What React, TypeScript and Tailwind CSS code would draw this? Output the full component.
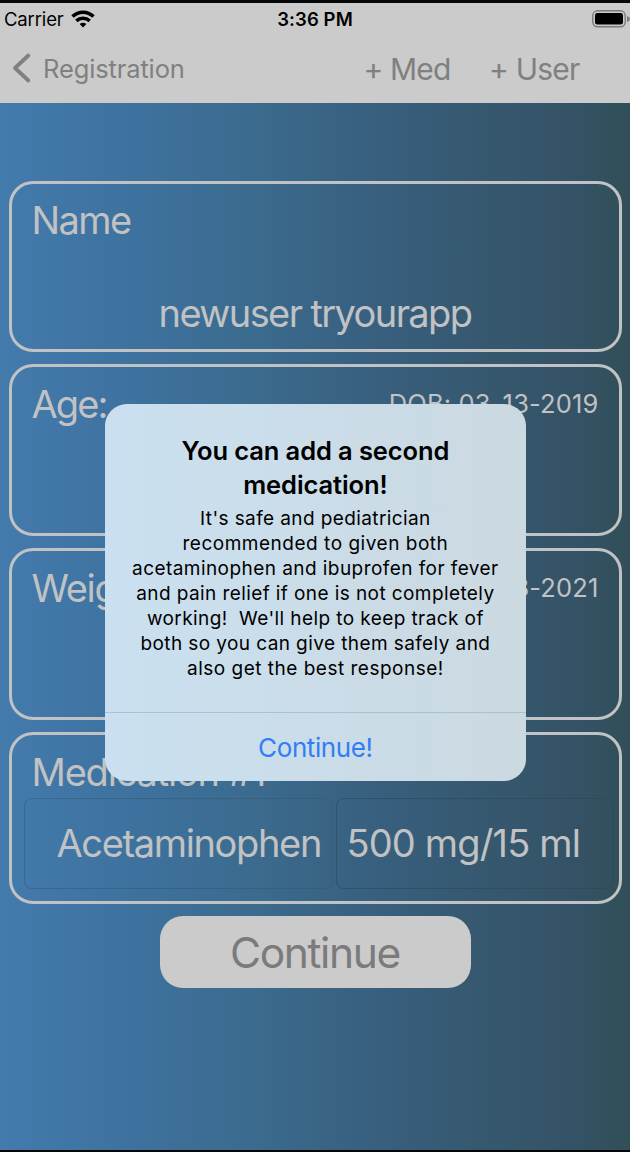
import React from "react";

const body = [
  ["It's safe and pediatrician", "tracking-[0.4px]"],
  ["recommended to given both", "tracking-[0.52px]"],
  ["acetaminophen and ibuprofen for fever", "tracking-[0.44px]"],
  ["and pain relief if one is not completely", "tracking-[0.41px]"],
  ["working!  We'll help to keep track of", "tracking-[0.41px]"],
  ["both so you can give them safely and", "tracking-[0.41px]"],
  ["also get the best response!", "tracking-[0.5px]"],
];

function Card({ title, spacing, right, children }: { title: string; spacing: string; right?: string; children?: React.ReactNode }) {
  return (
    <section className="h-[171.5px] shrink-0 rounded-[24px] border-3 border-[#c0c2c4] text-[#c0c2c4]">
      <div className="flex h-[72px] items-center justify-between pr-[20px] pl-[20px]">
        <h2 className={`text-[38px] leading-[72px] ${spacing}`}>{title}</h2>
        {right && <span className="pt-[2px] text-[25.5px] tracking-[0.15px]">{right}</span>}
      </div>
      {children}
    </section>
  );
}

export default function App() {
  return (
    <div className="relative flex h-[1152px] w-[630px] flex-col overflow-hidden bg-[#050607] pt-[3px] pb-[2px] font-['Inter',sans-serif]">
      <header className="h-[99.5px] shrink-0 bg-[#cbcbcb]">
        <div className="grid h-[32px] grid-cols-3 items-center text-[18.5px] text-black">
          <div className="flex items-center gap-[7px] pl-[4px]">
            <span className="pt-px tracking-[-0.15px]">Carrier</span>
            <svg width="24" height="18" viewBox="0 0 24 18" fill="none" stroke="black" strokeWidth="3.5">
              <path d="M1.5 6.6C7.5.7 16.5.7 22.5 6.6" />
              <path d="M5.3 10.9C9.2 7.3 14.8 7.3 18.7 10.9" />
              <path d="M12 17.5l-3.4-3.4q3.4-2.8 6.8 0z" fill="black" stroke="none" />
            </svg>
          </div>
          <span className="pt-px text-center font-semibold tracking-[0.1px]">3:36 PM</span>
          <svg className="justify-self-end" width="38" height="18" viewBox="0 0 38 18">
            <rect x="0.8" y="0.8" width="32.4" height="16" rx="4.8" fill="none" stroke="#7b7b7b" strokeWidth="1.4" />
            <rect x="3" y="3" width="28" height="11.6" rx="2.4" fill="black" />
            <path d="M35 6q3 1 3 3t-3 3z" fill="#7b7b7b" />
          </svg>
        </div>
        <nav className="flex h-[67px] items-center pl-[12px] text-[#808080]">
          <svg className="mb-px" width="19" height="30" viewBox="0 0 19 30" fill="none" stroke="#808080" strokeWidth="3.8" strokeLinecap="round" strokeLinejoin="round">
            <path d="M16.3 2.5L3 15L16.3 27.5" />
          </svg>
          <span className="ml-[12px] w-[320.5px] pt-[2px] text-[25.5px] tracking-[-0.13px]">Registration</span>
          <span className="w-[125.5px] pt-[2px] text-[30px] tracking-[-0.85px] whitespace-nowrap">+ Med</span>
          <span className="pt-[2px] text-[30px] tracking-[-0.8px] whitespace-nowrap">+ User</span>
        </nav>
      </header>
      <main className="flex flex-1 flex-col gap-[12.4px] bg-[linear-gradient(90deg,#437bad_0%,#3e729f_20%,#3b6b8e_40%,#386080_58%,#36586f_77%,#345265_92%,#314f57_100%)] px-[8.5px] pt-[78px]">
        <Card title="Name" spacing="tracking-[-1.6px]">
          <p className="mt-[38px] text-center text-[38px] leading-[38px] tracking-[-1.6px]">newuser tryourapp</p>
        </Card>
        <Card title="Age:" spacing="tracking-[-1.9px] pt-px" right="DOB: 03-13-2019" />
        <Card title="Weight:" spacing="tracking-[-1.3px] pt-px" right="03-13-2021" />
        <Card title="Medication #1" spacing="tracking-[-1.2px] pt-px">
          <div className="mt-[-9.5px] flex gap-[3px] pr-[5px] pl-[12.5px] text-[38px]">
            <div className="flex h-[91px] w-[309px] shrink-0 items-center justify-end rounded-[8px] border border-[#315674]/50 pt-px pr-[11px] tracking-[-1.35px]">Acetaminophen</div>
            <div className="flex h-[91px] flex-1 items-center rounded-[8px] border border-[#2c4858]/60 pt-px pl-[9.5px] tracking-[-0.85px] whitespace-nowrap">500 mg/15 ml</div>
          </div>
        </Card>
        <button className="h-[72px] w-[311px] shrink-0 self-center rounded-[23px] bg-[#cbcbcb] pt-[2px] text-[42.5px] tracking-[-1.35px] text-[#7b7b7b]">Continue</button>
      </main>
      <div role="dialog" className="absolute top-[403.5px] left-[105.25px] flex h-[377.5px] w-[420.25px] flex-col rounded-[22px] bg-linear-to-r from-[#cae0f0] to-[#cbd9e1] text-center text-black">
        <div className="h-[308px] pt-[30px]">
          <h1 className="text-[25.5px] leading-[34px] font-semibold tracking-[-0.1px]">You can add a second<br />medication!</h1>
          <div className="pt-[4px] text-[19px] leading-[25px] whitespace-pre">
            {body.map(([line, spacing]) => <p key={line} className={spacing}>{line}</p>)}
          </div>
        </div>
        <button className="flex-1 border-t border-[#a9c2d3] pt-[2px] text-[26px] tracking-[-0.4px] text-[#317df7]">Continue!</button>
      </div>
    </div>
  );
}
